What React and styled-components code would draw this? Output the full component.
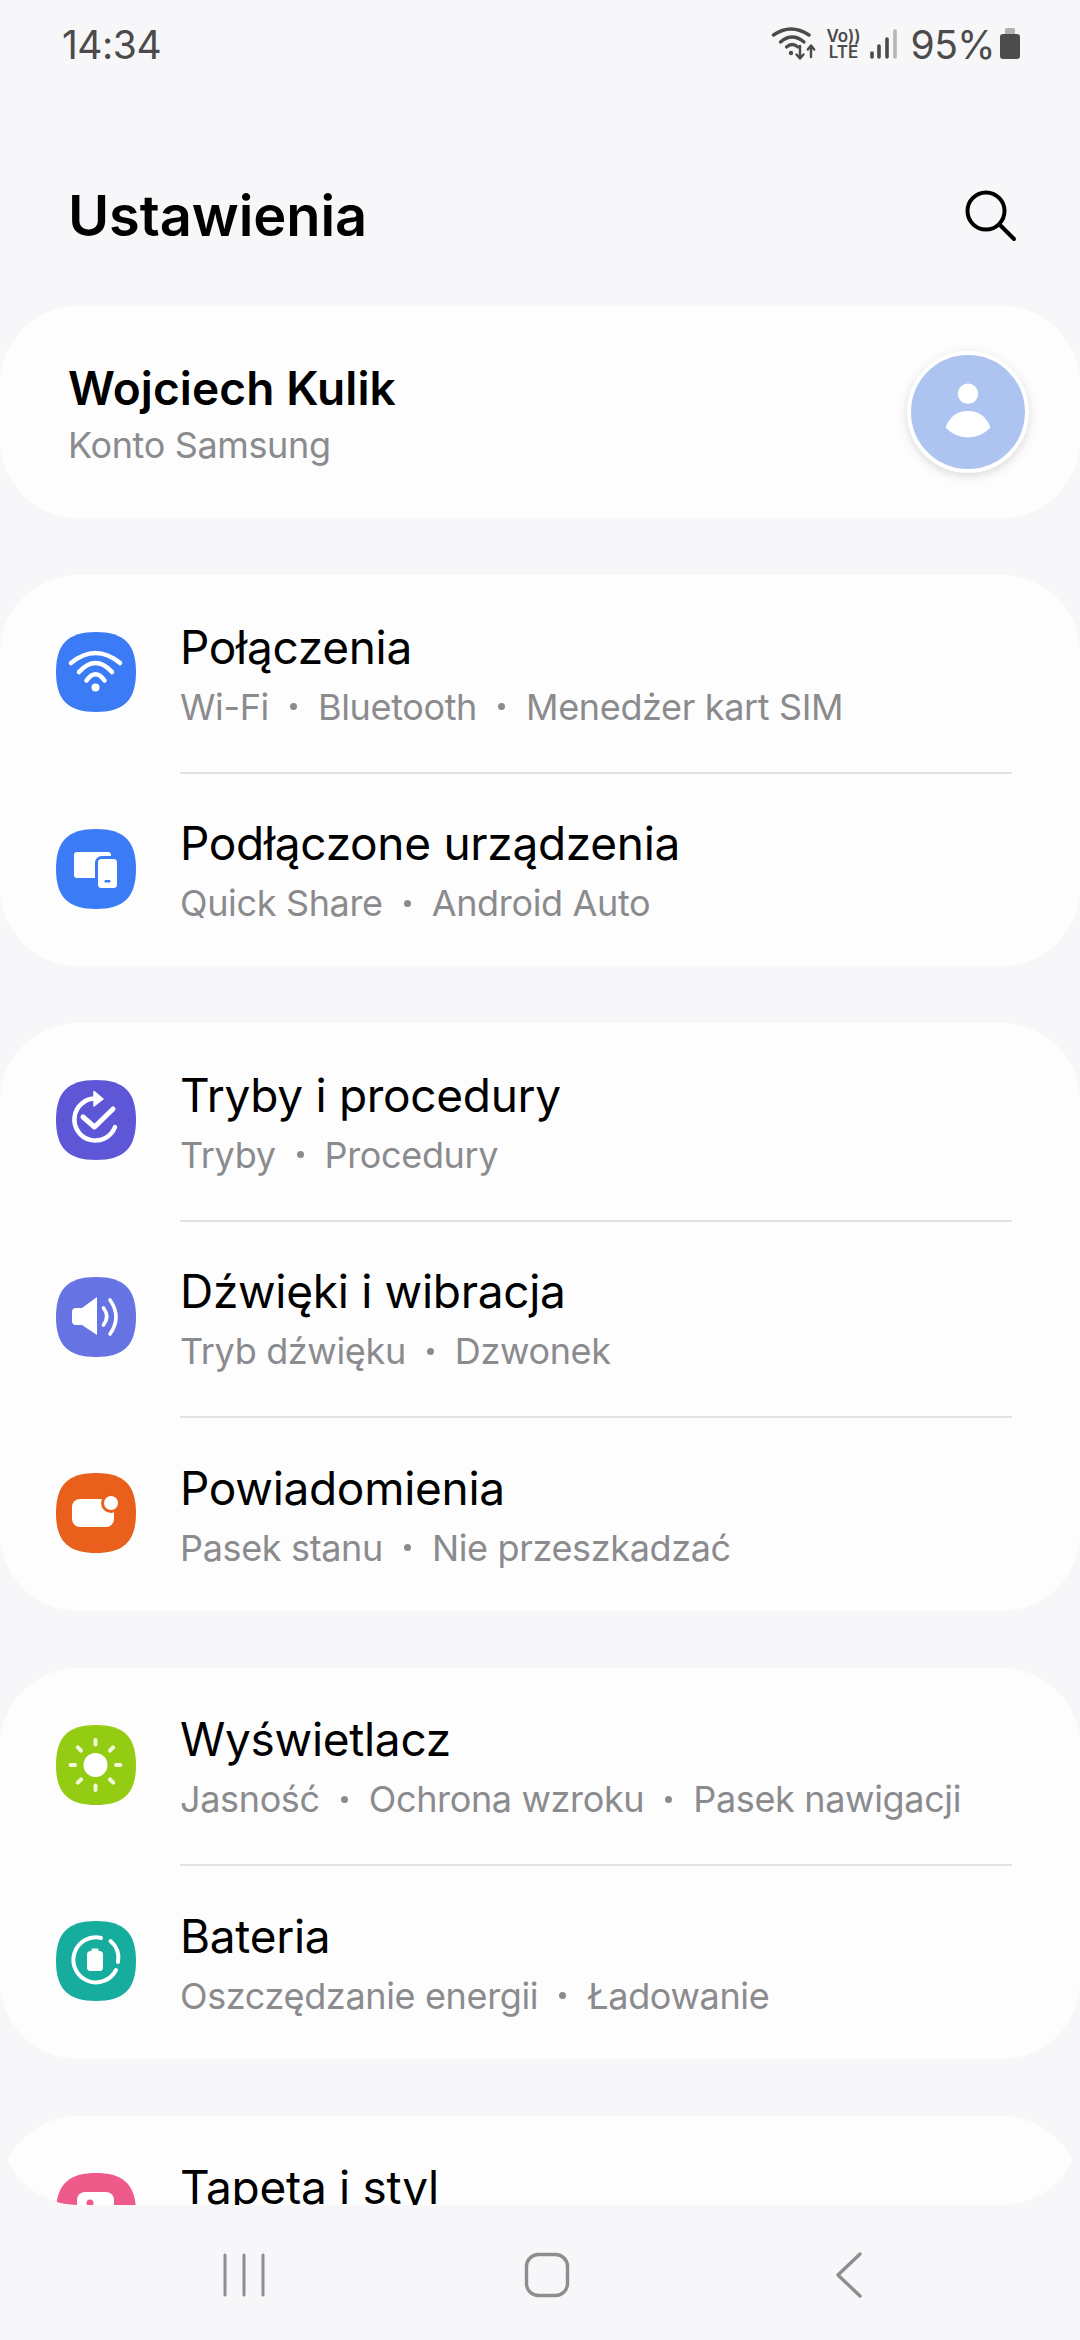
import React from 'react';
import styled, {createGlobalStyle} from 'styled-components';

const TILE_PATH = 'M40 0C68 0 80 12 80 40C80 68 68 80 40 80C12 80 0 68 0 40C0 12 12 0 40 0Z';

function Tile({color, children}) {
    return (
        <TileSvg viewBox="0 0 80 80">
            <path d={TILE_PATH} fill={color}/>
            {children}
        </TileSvg>
    );
}

const WifiIcon = () => (
    <Tile color="#3b7cf6">
        <g fill="none" stroke="#fff" strokeWidth="4.5" strokeLinecap="round">
            <path d="M15 31Q39.5 11 64 31"/>
            <path d="M23 40Q39.5 22 56 40"/>
            <path d="M30.5 48.5Q39.5 36 48.5 48.5"/>
        </g>
        <circle cx="39.5" cy="55.5" r="4" fill="#fff"/>
    </Tile>
);

const DevicesIcon = () => (
    <Tile color="#3b7cf6">
        <rect x="18" y="23" width="37" height="26" rx="3" fill="#fff"/>
        <rect x="40.5" y="28.5" width="22" height="32" rx="5" fill="#fff" stroke="#3b7cf6" strokeWidth="3"/>
        <rect x="48.5" y="51" width="6" height="2.5" rx="1.2" fill="#3b7cf6"/>
    </Tile>
);

const RoutinesIcon = () => (
    <Tile color="#5d57d8">
        <g fill="none" stroke="#fff" strokeWidth="4.5" strokeLinecap="round" strokeLinejoin="round">
            <path d="M59 47A21 21 0 1 1 40 18.5"/>
            <path d="M27 37L38.5 47L57 29" strokeWidth="5"/>
        </g>
        <path d="M38 11.5L47 19L38 26Z" fill="#fff" stroke="#fff" strokeWidth="1.5" strokeLinejoin="round"/>
    </Tile>
);

const SoundIcon = () => (
    <Tile color="#6673e2">
        <path d="M20 31H26L41 20V58L26 48H20A4 4 0 0 1 16 44V35A4 4 0 0 1 20 31Z" fill="#fff"/>
        <g fill="none" stroke="#fff" strokeWidth="3.6" strokeLinecap="round">
            <path d="M47.5 31Q54 39.5 47.5 48"/>
            <path d="M54 23Q66 40 54 57"/>
        </g>
    </Tile>
);

const NotificationsIcon = () => (
    <Tile color="#e8601c">
        <rect x="16" y="26" width="42" height="28" rx="8" fill="#fff"/>
        <circle cx="55" cy="30" r="10" fill="#e8601c"/>
        <circle cx="55" cy="30" r="7" fill="#fff"/>
    </Tile>
);

const DisplayIcon = () => (
    <Tile color="#94cc13">
        <circle cx="39.5" cy="40" r="12" fill="#fff"/>
        <g stroke="#fff" strokeOpacity="0.85" strokeWidth="4" strokeLinecap="round">
            {[0, 45, 90, 135, 180, 225, 270, 315].map(deg => (
                <line key={deg} x1="39.5" y1="15" x2="39.5" y2="19.5" transform={`rotate(${deg} 39.5 40)`}/>
            ))}
        </g>
    </Tile>
);

const BatteryIcon = () => (
    <Tile color="#16ad9e">
        <g fill="none" stroke="#fff" strokeWidth="4" strokeLinecap="round">
            <path d="M54.5 20A22.5 22.5 0 0 1 62 41"/>
            <path d="M60 49A22.5 22.5 0 1 1 45 17"/>
        </g>
        <rect x="31" y="30" width="16" height="20" rx="3.5" fill="#fff"/>
        <rect x="35.5" y="27.5" width="7" height="4" rx="1" fill="#fff"/>
    </Tile>
);

const WallpaperIcon = () => (
    <Tile color="#ee5a8a">
        <rect x="21" y="19" width="37" height="40" rx="8" fill="#fff"/>
        <circle cx="34" cy="30" r="3.5" fill="#ee5a8a"/>
    </Tile>
);

const GROUPS = [
    [
        {title: 'Połączenia', sub: ['Wi-Fi', 'Bluetooth', 'Menedżer kart SIM'], Icon: WifiIcon},
        {title: 'Podłączone urządzenia', sub: ['Quick Share', 'Android Auto'], Icon: DevicesIcon},
    ],
    [
        {title: 'Tryby i procedury', sub: ['Tryby', 'Procedury'], Icon: RoutinesIcon},
        {title: 'Dźwięki i wibracja', sub: ['Tryb dźwięku', 'Dzwonek'], Icon: SoundIcon},
        {title: 'Powiadomienia', sub: ['Pasek stanu', 'Nie przeszkadzać'], Icon: NotificationsIcon},
    ],
    [
        {title: 'Wyświetlacz', sub: ['Jasność', 'Ochrona wzroku', 'Pasek nawigacji'], Icon: DisplayIcon},
        {title: 'Bateria', sub: ['Oszczędzanie energii', 'Ładowanie'], Icon: BatteryIcon},
    ],
    [
        // the subtitle of this row is below the fold
        {title: 'Tapeta i styl', sub: [], Icon: WallpaperIcon},
    ],
];

function App() {
    return (
        <Page>
            <GlobalStyle/>
            <Main>
                <StatusBar>
                    <Clock>14:34</Clock>
                    <StatusRight>
                        <svg width="48" height="36" viewBox="0 0 48 36">
                            <g fill="none" stroke="#4b4b4b" strokeLinecap="round">
                                <path d="M3.5 9Q21 -3 39 9" strokeWidth="3.4"/>
                                <path d="M10.5 16Q22 6 34 16" strokeWidth="3.4"/>
                                <path d="M16.5 21Q22 16 28 21" strokeWidth="3.2"/>
                                <path d="M30 20V32M26.5 28.5L30 32.5L33.5 28.5M41 31V20M37.8 23.5L41 19.5L44.2 23.5" strokeWidth="2.4" strokeLinejoin="round"/>
                            </g>
                            <circle cx="21" cy="27" r="2.2" fill="#4b4b4b"/>
                        </svg>
                        <Volte><span>Vo))</span><span>LTE</span></Volte>
                        <svg width="28" height="32" viewBox="0 0 28 32">
                            <g strokeWidth="3.6" strokeLinecap="round">
                                <path d="M3 25V29" stroke="#4b4b4b"/>
                                <path d="M10 18V29" stroke="#4b4b4b"/>
                                <path d="M18 11V29" stroke="#4b4b4b"/>
                                <path d="M26 3V29" stroke="#b5b5b5"/>
                            </g>
                        </svg>
                        <Percent>95%</Percent>
                        <svg width="20" height="32" viewBox="0 0 20 32">
                            <rect x="5" y="0" width="10" height="8" rx="1.5" fill="#b0b0b0"/>
                            <rect x="0" y="6" width="20" height="25" rx="3" fill="#4b4b4b"/>
                        </svg>
                    </StatusRight>
                </StatusBar>
                <Header>
                    <Title>Ustawienia</Title>
                    <svg width="54" height="54" viewBox="0 0 54 54">
                        <circle cx="22" cy="22" r="18.5" fill="none" stroke="#000" strokeWidth="4"/>
                        <path d="M35.5 35.5L50 50" stroke="#000" strokeWidth="4" strokeLinecap="round"/>
                    </svg>
                </Header>
                <ProfileCard>
                    <ProfileText>
                        <ProfileName>Wojciech Kulik</ProfileName>
                        <Sub>Konto Samsung</Sub>
                    </ProfileText>
                    <Avatar>
                        <svg width="114" height="114" viewBox="0 0 112 112">
                            <circle cx="56" cy="38" r="10" fill="#fff"/>
                            <path d="M35 71C39 61 46 56 56 56C66 56 73 61 77 71C71 77 63 80 56 80C49 80 41 77 35 71Z" fill="#fff" stroke="#fff" strokeWidth="2" strokeLinejoin="round"/>
                        </svg>
                    </Avatar>
                </ProfileCard>
                {GROUPS.map((group, i) => (
                    <Card key={i}>
                        {group.map((item, j) => (
                            <React.Fragment key={item.title}>
                                {j > 0 && <Divider/>}
                                <Row>
                                    <item.Icon/>
                                    <RowText>
                                        <RowTitle>{item.title}</RowTitle>
                                        <Sub>
                                            {item.sub.map((s, k) => (
                                                <React.Fragment key={s}>
                                                    {k > 0 && <Dot/>}
                                                    {s}
                                                </React.Fragment>
                                            ))}
                                        </Sub>
                                    </RowText>
                                </Row>
                            </React.Fragment>
                        ))}
                    </Card>
                ))}
            </Main>
            <NavBar>
                <svg width="48" height="46" viewBox="0 0 48 46">
                    <path d="M5 3V43M24 3V43M43 3V43" stroke="#8e8e90" strokeWidth="3" strokeLinecap="round"/>
                </svg>
                <svg width="46" height="46" viewBox="0 0 46 46">
                    <rect x="2.5" y="2.5" width="41" height="41" rx="12" fill="none" stroke="#8e8e90" strokeWidth="3.4"/>
                </svg>
                <svg width="28" height="46" viewBox="0 0 28 46">
                    <path d="M25 2L3 23L25 44" fill="none" stroke="#8e8e90" strokeWidth="3.4" strokeLinecap="round" strokeLinejoin="round"/>
                </svg>
            </NavBar>
        </Page>
    );
}

const GlobalStyle = createGlobalStyle`
  html, body {
    margin: 0;
    padding: 0;
    background: #f7f7f9;
    font-family: Inter, "Noto Sans", sans-serif;
  }
`

const Page = styled.div`
  width: 1080px;
  height: 2340px;
  display: flex;
  flex-direction: column;
  overflow: hidden;
  background: #f7f7f9;
`

const Main = styled.main`
  height: 2205px;
  flex: none;
  overflow: hidden;
  border-radius: 0 0 78px 78px;
`

const StatusBar = styled.div`
  height: 88px;
  padding: 0 60px 0 62px;
  display: flex;
  align-items: center;
  justify-content: space-between;
  color: #4b4b4b;
`

const Clock = styled.span`
  font-size: 39px;
  letter-spacing: -0.5px;
`

const StatusRight = styled.div`
  display: flex;
  align-items: center;
  gap: 8px;
`

const Volte = styled.div`
  display: flex;
  flex-direction: column;
  align-items: center;
  font-size: 17px;
  line-height: 16px;
  font-weight: 600;
`

const Percent = styled.span`
  font-size: 39px;
  letter-spacing: -0.6px;
  margin: 0 -3px 0 6px;
`

const Header = styled.header`
  height: 218px;
  box-sizing: border-box;
  padding: 37px 62px 0 68px;
  display: flex;
  align-items: center;
  justify-content: space-between;
`

const Title = styled.h1`
  margin: 0;
  font-size: 56px;
  font-weight: 600;
  letter-spacing: -0.1px;
  color: #000;
`

const ProfileCard = styled.section`
  height: 212px;
  padding: 0 51px 0 68px;
  margin-bottom: 57px;
  display: flex;
  align-items: center;
  justify-content: space-between;
  background: #fdfdfe;
  border-radius: 78px;
`

const ProfileText = styled.div`
  padding-top: 3px;
`

const ProfileName = styled.div`
  font-size: 46px;
  font-weight: 600;
  letter-spacing: 0.1px;
  color: #000;
  margin-bottom: 7px;
`

const Avatar = styled.div`
  width: 114px;
  height: 114px;
  border: 4px solid #fff;
  border-radius: 50%;
  background: #adc4f0;
  box-shadow: 0 3px 8px rgba(120, 110, 100, 0.25);
`

const Card = styled.section`
  margin-bottom: 57px;
  background: #fdfdfe;
  border-radius: 78px;
`

const Row = styled.div`
  height: 194.5px;
  padding: 0 68px 0 56px;
  display: flex;
  align-items: center;
  gap: 44px;
`

const TileSvg = styled.svg`
  width: 80px;
  height: 80px;
  flex: none;
`

const RowText = styled.div`
  display: flex;
  flex-direction: column;
  gap: 12px;
  padding-top: 5px;
`

const RowTitle = styled.div`
  font-size: 46px;
  line-height: 52px;
  letter-spacing: -0.3px;
  color: #000;
`

const Sub = styled.div`
  display: flex;
  align-items: center;
  min-height: 44px;
  font-size: 36px;
  line-height: 44px;
  letter-spacing: -0.35px;
  color: #8b8b8e;
`

const Dot = styled.span`
  width: 7px;
  height: 7px;
  margin: 0 21px;
  border-radius: 50%;
  background: #8b8b8e;
`

const Divider = styled.div`
  height: 2px;
  margin: 2px 68px -2px 180px;
  background: #e2e2e4;
`

const NavBar = styled.nav`
  flex: 1;
  padding: 47px 0 0 220px;
  display: grid;
  grid-template-columns: 304px 311px auto;
  align-items: start;
`

export default App;
